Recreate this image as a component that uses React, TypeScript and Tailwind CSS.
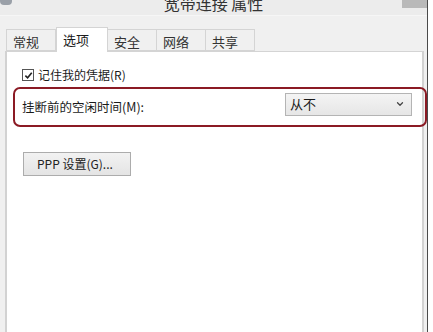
import { ChevronDown } from 'lucide-react';

const font = { fontFamily: '"Microsoft YaHei", "Noto Sans CJK SC", "Noto Sans", sans-serif' };

const tabs = ['常规', '选项', '安全', '网络', '共享'];

const App = () => {
  return (
    <div className="w-[433px] h-[332px] overflow-hidden bg-white flex text-[#1a1a1a]" style={font}>
      <div className="w-[428px] h-full bg-[#f0f0f0] border-r border-[#4a4a4a] flex flex-col">
        {/* title bar */}
        <div className="h-[16px] shrink-0 bg-[#ececec] border-b border-[#f6f6f6] relative flex justify-center">
          <div className="absolute left-0 top-0 w-[12px] h-[5px] rounded-b-sm bg-[#9aa0a8]" />
          <span className="text-[16px] leading-none -mt-[5px] text-[#333]">宽带连接 属性</span>
          <div className="absolute right-0 top-0 w-[25px] h-[8px] bg-[#b9b9b9]" />
        </div>

        {/* tabs */}
        <div className="flex items-end h-[35px] pl-[6px] shrink-0">
          {tabs.map((t, i) =>
            i === 1 ? (
              <div
                key={t}
                className="w-[52px] h-[25px] -mb-px bg-white border border-b-0 border-[#d4d4d4] z-10 pl-[6px] pt-[2px] text-[13px]"
              >
                {t}
              </div>
            ) : (
              <div
                key={t}
                className="w-[50px] h-[22px] bg-[#f0f0f0] border border-[#d4d4d4] -ml-px first:ml-0 pl-[6px] pt-[2px] text-[13px] text-[#333]"
              >
                {t}
              </div>
            )
          )}
        </div>

        {/* panel */}
        <div className="flex-1 ml-[5px] mr-[3px] bg-white border-2 border-b-0 border-[#d2d2d2] border-t border-t-[#d4d4d4] pt-[16px] pl-[15px] text-[12px]">
          <label className="flex items-center gap-[4px] h-[14px]">
            <span className="w-[12px] h-[12px] border border-[#555] bg-white flex items-center justify-center">
              <svg viewBox="0 0 10 10" className="w-[9px] h-[9px]">
                <path d="M1.5 5.2 L4 7.6 L8.6 2" fill="none" stroke="#222" strokeWidth="1.8" />
              </svg>
            </span>
            <span>记住我的凭据(R)</span>
          </label>

          <div className="mt-[5px] -ml-[9px] mr-[-5px] h-[40px] border-2 border-[#8b1a24] rounded-[7px] flex items-center justify-between pl-[7px] pr-[13px]">
            <span className="text-[12.5px]">挂断前的空闲时间(M):</span>
            <div className="w-[127px] h-[23px] mt-[-6px] border border-[#b4b4b4] bg-gradient-to-b from-[#f4f4f4] to-[#e6e6e6] flex items-center justify-between pl-[4px] pr-[6px]">
              <span className="text-[13px]">从不</span>
              <ChevronDown size={10} strokeWidth={3} className="text-[#444]" />
            </div>
          </div>

          <button className="mt-[25px] ml-[1px] w-[108px] h-[24px] border border-[#acacac] bg-gradient-to-b from-[#f2f2f2] to-[#e4e4e4] text-[12px] text-left pl-[13px] text-[#222]">
            PPP 设置(G)...
          </button>
        </div>
      </div>
    </div>
  );
};

export default App;
